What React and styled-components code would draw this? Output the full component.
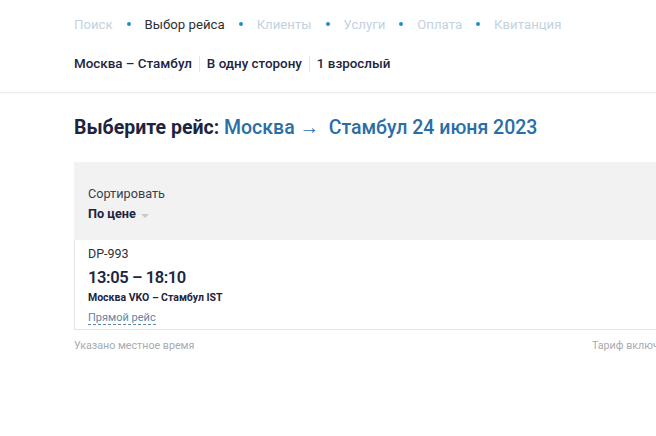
import React from 'react';
import styled, { createGlobalStyle } from 'styled-components';

const GlobalStyle = createGlobalStyle`
  body {
    margin: 0;
    font-family: Roboto, "Noto Sans", sans-serif;
    background: #fff;
    overflow: hidden;
  }
`;

const steps = ['Поиск', 'Выбор рейса', 'Клиенты', 'Услуги', 'Оплата', 'Квитанция'];

const Header = styled.header`
  padding: 15px 0 0 74px;
  height: 77px;
  border-bottom: 1px solid #ececec;
  box-shadow: 0 1px 2px rgba(0, 0, 0, 0.04);
`;

const Steps = styled.nav`
  display: flex;
  align-items: center;
  gap: 14px;
  height: 18px;
`;

const Step = styled.span`
  font-size: 13.2px;
  color: ${(p) => (p.$active ? '#2c2f36' : '#c3d2e0')};
`;

const Dot = styled.span`
  width: 4px;
  height: 4px;
  border-radius: 50%;
  background: #1f8fc4;
`;

const Summary = styled.div`
  display: flex;
  align-items: center;
  margin-top: 23px;
  font-size: 13.4px;
  font-weight: 500;
  color: #1c2540;
`;

const SummaryItem = styled.span`
  padding: 0 7px;
  border-left: ${(p) => (p.$first ? 'none' : '1px solid #e3e3e3')};
  padding-left: ${(p) => (p.$first ? '0' : '7px')};
  line-height: 16px;
`;

const Main = styled.main`
  padding: 23px 0 0 74px;
  width: 700px;
`;

const Title = styled.h1`
  margin: 0;
  font-size: 19.5px;
  font-weight: 700;
  color: #1c2540;
`;

const Accent = styled.span`
  color: #2a6ea6;
  font-weight: 500;
`;

const SortPanel = styled.div`
  margin-top: 23px;
  background: #f2f2f2;
  padding: 24px 14px 16px;
  height: 38px;
`;

const SortLabel = styled.div`
  font-size: 12.7px;
  color: #3a3f4a;
`;

const SortValue = styled.div`
  margin-top: 5px;
  display: flex;
  align-items: center;
  gap: 5px;
  font-size: 12.7px;
  font-weight: 700;
  color: #1c2540;
`;

const Caret = styled.span`
  width: 0;
  height: 0;
  border-left: 4px solid transparent;
  border-right: 4px solid transparent;
  border-top: 4px solid #c9c9c9;
  margin-top: 4px;
`;

const Card = styled.div`
  border: 1px solid #e4e4e4;
  border-top: none;
  padding: 6px 13px 4px;
`;

const Flight = styled.div`
  font-size: 12.5px;
  color: #2c2f36;
`;

const Times = styled.div`
  margin-top: 7px;
  height: 21px;
  font-size: 16.5px;
  font-weight: 600;
  letter-spacing: -0.4px;
  color: #1c2540;
`;

const Route = styled.div`
  margin-top: 2px;
  font-size: 10.5px;
  font-weight: 700;
  color: #1c2540;
`;

const Direct = styled.span`
  display: inline-block;
  margin-top: 7px;
  font-size: 11px;
  color: #5f86a8;
  border-bottom: 1px dashed #5f86a8;
  line-height: 13px;
`;

const Footer = styled.div`
  display: grid;
  grid-template-columns: 518px auto;
  margin-top: 9px;
  font-size: 10.7px;
  color: #a8abb0;
  white-space: nowrap;
`;

export default function App() {
  return (
    <>
      <GlobalStyle />
      <Header>
        <Steps>
          {steps.map((s, i) => (
            <React.Fragment key={s}>
              {i > 0 && <Dot />}
              <Step $active={i === 1}>{s}</Step>
            </React.Fragment>
          ))}
        </Steps>
        <Summary>
          <SummaryItem $first>Москва – Стамбул</SummaryItem>
          <SummaryItem>В одну сторону</SummaryItem>
          <SummaryItem>1 взрослый</SummaryItem>
        </Summary>
      </Header>
      <Main>
        <Title>
          Выберите рейс: <Accent>Москва →&nbsp; Стамбул 24 июня 2023</Accent>
        </Title>
        <SortPanel>
          <SortLabel>Сортировать</SortLabel>
          <SortValue>
            По цене <Caret />
          </SortValue>
        </SortPanel>
        <Card>
          <Flight>DP-993</Flight>
          <Times>13:05 – 18:10</Times>
          <Route>Москва VKO – Стамбул IST</Route>
          <Direct>Прямой рейс</Direct>
        </Card>
        <Footer>
          <span>Указано местное время</span>
          <span>Тариф включает</span>
        </Footer>
      </Main>
    </>
  );
}
